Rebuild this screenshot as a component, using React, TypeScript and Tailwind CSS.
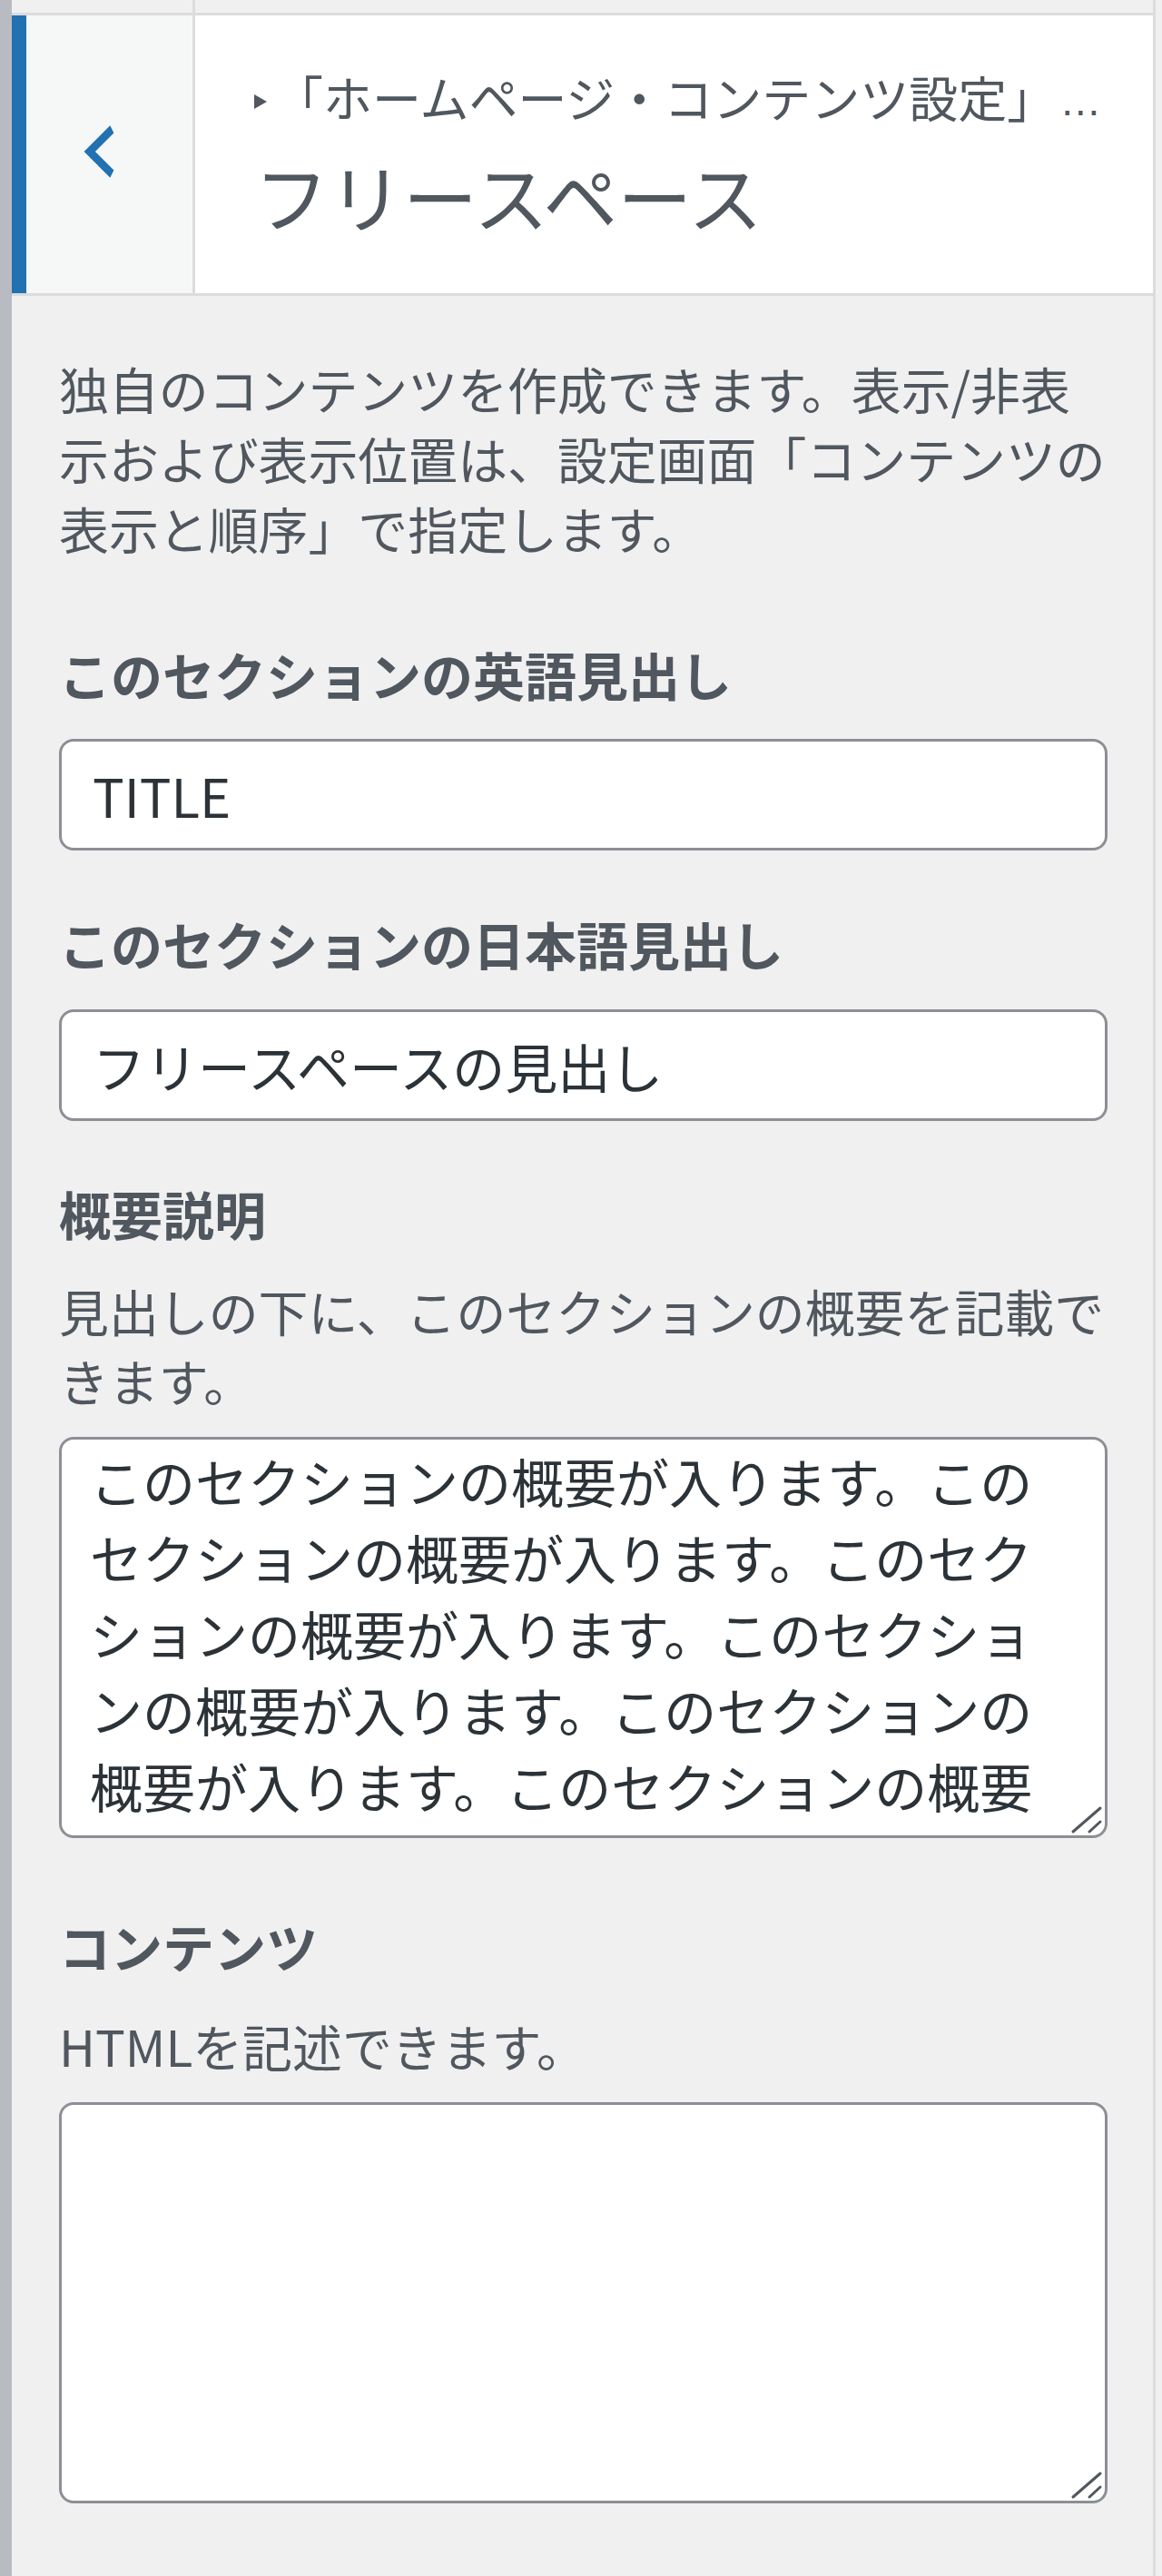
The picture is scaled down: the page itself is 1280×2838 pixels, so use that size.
import React from "react";

function ResizeHandle() {
  return (
    <svg
      className="pointer-events-none absolute bottom-0 right-0 h-[40px] w-[44px]"
      viewBox="0 0 44 40"
      fill="none"
    >
      <line x1="6" y1="33" x2="36" y2="7" stroke="#50575e" strokeWidth="3" strokeLinecap="round" />
      <line x1="24" y1="33" x2="36" y2="22" stroke="#50575e" strokeWidth="3" strokeLinecap="round" />
    </svg>
  );
}

function TextArea({ value }: { value: string }) {
  return (
    <div className="relative h-[442px] w-full">
      <textarea
        readOnly
        defaultValue={value}
        className="block h-full w-full resize-none overflow-hidden rounded-[16px] border-[3px] border-[#8c8f94] bg-white px-[31px] pt-[3px] text-[58px] leading-[84px] text-[#2c3338] outline-none"
      />
      <ResizeHandle />
    </div>
  );
}

function TextInput({ value }: { value: string }) {
  return (
    <input
      readOnly
      value={value}
      className="block h-[123px] w-full rounded-[16px] border-[3px] border-[#8c8f94] bg-white px-[34px] text-[58px] text-[#2c3338] outline-none"
    />
  );
}

export default function App() {
  const summary = "このセクションの概要が入ります。".repeat(6);
  return (
    <div className="flex min-h-[2838px] w-[1280px] bg-[#f0f0f1] font-['Noto_Sans_CJK_JP',sans-serif] text-[#50575e]">
      <div className="w-[13px] shrink-0 bg-[#b8bcc2]" />
      <div className="flex w-[1257px] shrink-0 flex-col">
        {/* strip above header */}
        <div className="flex h-[17px] border-b-[3px] border-[#dcdcde]">
          <div className="w-[199px]" />
          <div className="w-[3px] bg-[#dcdcde]" />
        </div>

        {/* section header */}
        <div className="flex h-[309px] border-b-[3px] border-[#dcdcde]">
          <div className="w-[16px] shrink-0 bg-[#2271b1]" />
          <div className="flex w-[186px] shrink-0 items-center justify-center border-r-[3px] border-[#dcdcde] bg-[#f6f7f7] pb-[6px] pr-[23px]">
            <svg className="h-[82px] w-[82px]" viewBox="0 0 20 20">
              <path d="M14 5l-5 5 5 5-1 2-7-7 7-7z" fill="#2271b1" />
            </svg>
          </div>
          <div className="flex-1 bg-white pl-[65px] pt-[60px]">
            <div className="flex h-[60px] items-center whitespace-nowrap text-[54px] leading-[60px]">
              <svg className="mr-[8px] mt-[10px] h-[16px] w-[14px]" viewBox="0 0 14 16">
                <path d="M0 0L14 8L0 16z" fill="#50575e" />
              </svg>
              <span>「ホームページ・コンテンツ設定」</span>
              <span className="ml-[4px] mt-[8px] font-['Liberation_Sans',sans-serif] text-[46px]">…</span>
            </div>
            <h3 className="mt-[33px] text-[82px] font-normal leading-[90px]">フリースペース</h3>
          </div>
        </div>

        {/* body */}
        <div className="flex flex-col pb-[80px] pl-[52px] pr-[50px] pt-[63px]">
          <p className="text-[54.9px] leading-[77px]">
            独自のコンテンツを作成できます。表示/非表示および表示位置は、設定画面「コンテンツの表示と順序」で指定します。
          </p>

          <label className="mt-[87px] block text-[57px] font-bold leading-[70px]">このセクションの英語見出し</label>
          <div className="mt-[37px]">
            <TextInput value="TITLE" />
          </div>

          <label className="mt-[67px] block text-[57px] font-bold leading-[70px]">このセクションの日本語見出し</label>
          <div className="mt-[38px]">
            <TextInput value="フリースペースの見出し" />
          </div>

          <label className="mt-[66px] block text-[57px] font-bold leading-[70px]">概要説明</label>
          <p className="mt-[34px] text-[54.9px] leading-[77px]">
            見出しの下に、このセクションの概要を記載できます。
          </p>
          <div className="mt-[24px]">
            <TextArea value={summary} />
          </div>

          <label className="mt-[83px] block text-[57px] font-bold leading-[70px]">コンテンツ</label>
          <p className="mt-[37px] text-[54.9px] leading-[77px]">HTMLを記述できます。</p>
          <div className="mt-[24px]">
            <TextArea value="" />
          </div>
        </div>
      </div>
      <div className="w-[3px] shrink-0 bg-[#dcdcde]" />
      <div className="flex-1" />
    </div>
  );
}
